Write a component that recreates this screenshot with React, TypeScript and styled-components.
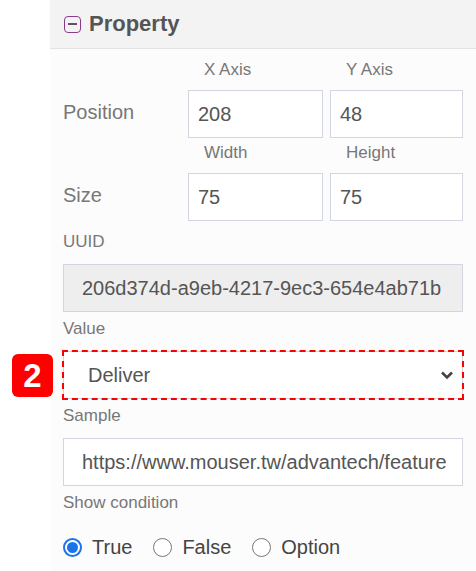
import React from "react";
import styled, { createGlobalStyle } from "styled-components";

const GlobalStyle = createGlobalStyle`
    html, body {
        margin: 0;
        padding: 0;
        background: #ffffff;
        font-family: "Liberation Sans", Arial, sans-serif;
    }
`;

const Page = styled.div`
    width: 476px;
    height: 571px;
    overflow: hidden;
    display: flex;
`;

const Gutter = styled.div`
    width: 50px;
    flex: none;
`;

const Panel = styled.div`
    width: 426px;
    min-width: 0;
    flex: none;
    background: #fcfcfc;
    display: flex;
    flex-direction: column;
`;

const Header = styled.div`
    height: 49px;
    box-sizing: border-box;
    background: #f3f3f3;
    border-bottom: 1px solid #e2e2e2;
    display: flex;
    align-items: center;
    gap: 8px;
    padding-left: 14px;
`;

const CollapseIcon = styled.span`
    width: 17px;
    height: 17px;
    box-sizing: border-box;
    border: 1.5px solid #8a3c8a;
    border-radius: 4px;
    display: flex;
    align-items: center;
    justify-content: center;

    &::after {
        content: "";
        width: 9px;
        height: 1.5px;
        background: #6b4a6b;
    }
`;

const Title = styled.h2`
    margin: 0;
    font-size: 22px;
    font-weight: 700;
    color: #555555;
`;

const Body = styled.div`
    padding: 11px 13px 0 13px;
    display: flex;
    flex-direction: column;
    min-width: 0;
`;

const Pairs = styled.div`
    display: flex;
    flex-direction: column;
    gap: 5px;
    margin-bottom: 4px;
`;

const PairBlock = styled.div`
    display: grid;
    grid-template-columns: 118px 135px 133px;
    grid-template-rows: 20px 48px;
    column-gap: 7px;
    row-gap: 10px;
    align-items: center;
`;

const AxisLabel = styled.span`
    font-size: 17px;
    color: #777777;
    padding-left: 16px;
    line-height: 20px;
`;

const RowLabel = styled.span`
    font-size: 20px;
    color: #777777;
    padding-bottom: 4px;
`;

const Input = styled.div<{ $readonly?: boolean }>`
    height: 48px;
    min-width: 0;
    box-sizing: border-box;
    border: 1.5px solid #d3d6e0;
    background: ${({ $readonly }) => ($readonly ? "#eeeeee" : "#ffffff")};
    display: flex;
    align-items: center;
    padding: 0 ${({ $readonly }) => ($readonly ? "16px 0 18px" : "9px")};
    font-size: 20px;
    color: #555555;
    white-space: nowrap;
    overflow: hidden;
`;

const WideInput = styled(Input)`
    padding: 0 16px 0 18px;
`;

const ClipText = styled.span`
    overflow: hidden;
    display: block;
    width: 100%;
`;

const FieldLabel = styled.div`
    font-size: 17px;
    color: #777777;
    line-height: 20px;
    margin: 7px 0 12px 0;
`;

const SelectWrap = styled.div`
    position: relative;
    outline: 2px dashed #ff0000;
    outline-offset: -1px;
`;

const Select = styled.div`
    height: 48px;
    box-sizing: border-box;
    border: 1.5px solid #d3d6e0;
    background: #ffffff;
    display: flex;
    align-items: center;
    justify-content: space-between;
    padding: 0 8px 0 24px;
    font-size: 20px;
    color: #555555;
`;

const Badge = styled.span`
    position: absolute;
    left: -51px;
    top: 3px;
    width: 41px;
    height: 43px;
    border-radius: 6px;
    background: #ff0000;
    color: #ffffff;
    font-size: 33px;
    font-weight: 700;
    display: flex;
    align-items: center;
    justify-content: center;
`;

const RadioRow = styled.div`
    display: flex;
    align-items: center;
    gap: 21px;
    margin-top: 10px;
`;

const RadioOption = styled.label`
    display: flex;
    align-items: center;
    gap: 10px;
    font-size: 20px;
    line-height: 24px;
    color: #444444;
`;

const RadioDot = styled.span<{ $checked?: boolean }>`
    width: 19px;
    height: 19px;
    box-sizing: border-box;
    border-radius: 50%;
    border: ${({ $checked }) => ($checked ? "2px solid #1a73e8" : "1.5px solid #777777")};
    background: #ffffff;
    display: flex;
    align-items: center;
    justify-content: center;

    &::after {
        content: "";
        display: ${({ $checked }) => ($checked ? "block" : "none")};
        width: 11px;
        height: 11px;
        border-radius: 50%;
        background: #1a73e8;
    }
`;

const Chevron = () => (
    <svg width="14" height="10" viewBox="0 0 14 10">
        <path d="M2 2.5 L7 7.5 L12 2.5" fill="none" stroke="#444" strokeWidth="2.6" />
    </svg>
);

const App = () => {
    const conditions = ["True", "False", "Option"];

    return (
        <>
            <GlobalStyle />
            <Page>
                <Gutter />
                <Panel>
                    <Header>
                        <CollapseIcon />
                        <Title>Property</Title>
                    </Header>
                    <Body>
                        <Pairs>
                            <PairBlock>
                                <span />
                                <AxisLabel>X Axis</AxisLabel>
                                <AxisLabel>Y Axis</AxisLabel>
                                <RowLabel>Position</RowLabel>
                                <Input>208</Input>
                                <Input>48</Input>
                            </PairBlock>
                            <PairBlock>
                                <span />
                                <AxisLabel>Width</AxisLabel>
                                <AxisLabel>Height</AxisLabel>
                                <RowLabel>Size</RowLabel>
                                <Input>75</Input>
                                <Input>75</Input>
                            </PairBlock>
                        </Pairs>
                        <FieldLabel>UUID</FieldLabel>
                        <Input $readonly>206d374d-a9eb-4217-9ec3-654e4ab71b</Input>
                        <FieldLabel>Value</FieldLabel>
                        <SelectWrap>
                            <Badge>2</Badge>
                            <Select>
                                <span>Deliver</span>
                                <Chevron />
                            </Select>
                        </SelectWrap>
                        <FieldLabel>Sample</FieldLabel>
                        <WideInput>
                            <ClipText>https://www.mouser.tw/advantech/featured-products/</ClipText>
                        </WideInput>
                        <FieldLabel>Show condition</FieldLabel>
                        <RadioRow>
                            {conditions.map((c, i) => (
                                <RadioOption key={c}>
                                    <RadioDot $checked={i === 0} />
                                    {c}
                                </RadioOption>
                            ))}
                        </RadioRow>
                    </Body>
                </Panel>
            </Page>
        </>
    );
};

export default App;
